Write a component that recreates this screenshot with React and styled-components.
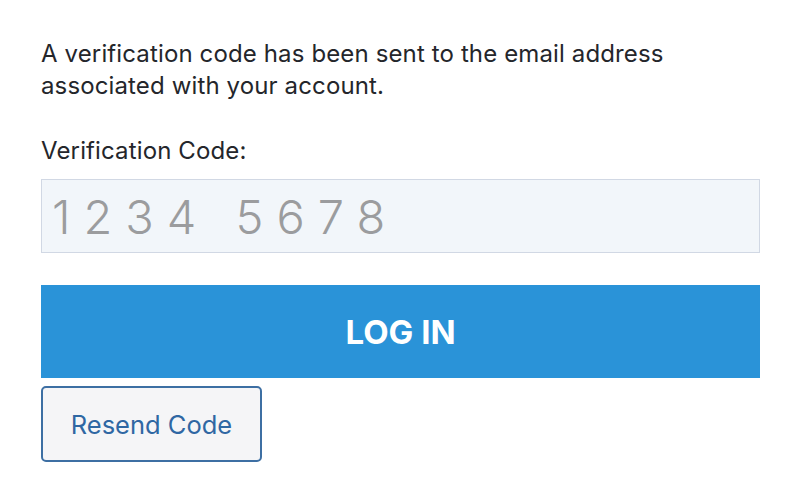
import React from 'react';
import styled, { createGlobalStyle } from 'styled-components';

const GlobalStyle = createGlobalStyle`
  html, body {
    margin: 0;
    padding: 0;
    background: #ffffff;
  }
  body {
    font-family: Inter, 'Liberation Sans', Arial, sans-serif;
  }
`;

const Page = styled.div`
  width: 800px;
  height: 494px;
  padding: 38px 40px 0 41px;
  box-sizing: border-box;
  display: flex;
  flex-direction: column;
  align-items: flex-start;
`;

const Message = styled.p`
  margin: 0;
  font-size: 24px;
  letter-spacing: 0.13px;
  line-height: 32px;
  color: #24262b;
`;

const Label = styled.label`
  margin-top: 33px;
  font-size: 24px;
  letter-spacing: 0.13px;
  line-height: 32px;
  color: #24262b;
`;

const CodeInput = styled.input`
  margin-top: 12px;
  width: 719px;
  height: 74px;
  box-sizing: border-box;
  padding: 0 10px;
  border: 1px solid #d1d8e4;
  background: #f2f6fa;
  font-family: Inter, 'Liberation Sans', Arial, sans-serif;
  font-size: 47px;
  font-weight: 300;
  letter-spacing: 13px;
  color: #333;
  outline: none;

  &::placeholder {
    color: #9b9c9e;
  }
`;

const Button = styled.button`
  box-sizing: border-box;
  font-family: Inter, 'Liberation Sans', Arial, sans-serif;
  cursor: pointer;
`;

const LoginButton = styled(Button)`
  margin-top: 32px;
  width: 719px;
  height: 93px;
  border: none;
  background: #2a93d8;
  color: #ffffff;
  font-size: 33px;
  font-weight: 700;
`;

const ResendButton = styled(Button)`
  margin-top: 8px;
  width: 221px;
  height: 76px;
  border: 2px solid #3d6fa3;
  border-radius: 5px;
  background: #f5f5f7;
  color: #2f67a3;
  font-size: 25.5px;
`;

export default function App() {
  return (
    <>
      <GlobalStyle />
      <Page>
        <Message>
          A verification code has been sent to the email address
          <br />
          associated with your account.
        </Message>
        <Label htmlFor="code">Verification Code:</Label>
        <CodeInput id="code" type="text" placeholder="1234 5678" />
        <LoginButton type="button">LOG IN</LoginButton>
        <ResendButton type="button">Resend Code</ResendButton>
      </Page>
    </>
  );
}
